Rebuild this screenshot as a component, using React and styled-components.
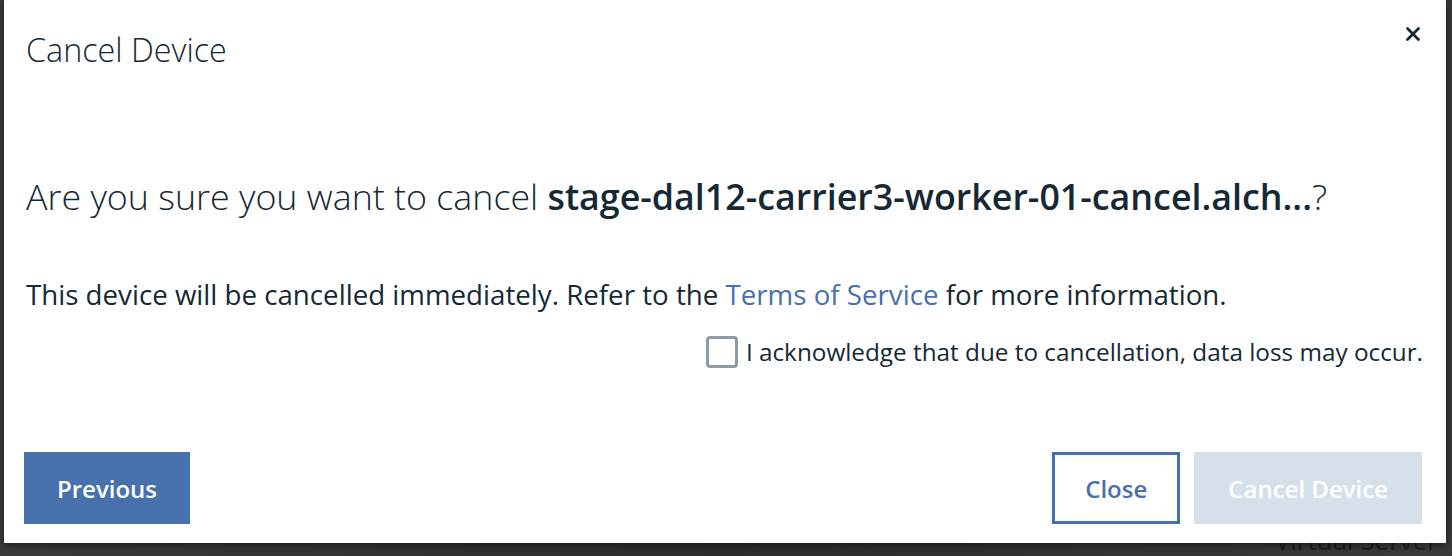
import styled, { createGlobalStyle } from "styled-components";

const GlobalStyle = createGlobalStyle`
  html, body {
    margin: 0;
    padding: 0;
    background: #2b2b2b;
    overflow: hidden;
  }
  body {
    font-family: "Open Sans", "Noto Sans", sans-serif;
    color: #152935;
  }
`;

export default function App() {
  return (
    <>
      <GlobalStyle />
      <StyledPage>
        <StyledModal>
          <StyledHeader>
            <StyledTitle>Cancel Device</StyledTitle>
            <StyledCloseIcon aria-label="close">
              <svg width="16" height="16" viewBox="0 0 16 16">
                <path
                  d="M2.5 2.5 L13.5 13.5 M13.5 2.5 L2.5 13.5"
                  stroke="#152935"
                  strokeWidth="2.8"
                  strokeLinecap="round"
                />
              </svg>
            </StyledCloseIcon>
          </StyledHeader>

          <StyledBody>
            <StyledQuestion>
              Are you sure you want to cancel{" "}
              <strong>stage-dal12-carrier3-worker-01-cancel.alch...</strong>?
            </StyledQuestion>
            <StyledText>
              This device will be cancelled immediately. Refer to the{" "}
              <StyledLink href="#">Terms of Service</StyledLink> for more
              information.
            </StyledText>
            <StyledCheckRow>
              <StyledCheckbox />
              <span>I acknowledge that due to cancellation, data loss may occur.</span>
            </StyledCheckRow>
          </StyledBody>

          <StyledFooter>
            <StyledButton $variant="primary">Previous</StyledButton>
            <StyledButtonGroup>
              <StyledButton $variant="secondary">Close</StyledButton>
              <StyledButton $variant="disabled" disabled>
                Cancel Device
              </StyledButton>
            </StyledButtonGroup>
          </StyledFooter>
        </StyledModal>
        <StyledUnderlay>
          <span>Virtual Server</span>
        </StyledUnderlay>
      </StyledPage>
    </>
  );
}

const StyledPage = styled.div`
  display: flex;
  flex-direction: column;
  width: 1452px;
  height: 556px;
  padding: 0 6px 0 4px;
  box-sizing: border-box;
  background: linear-gradient(to right, #3a3a3a, #2c2c2c 50%, #3a3a3a);
`;

const StyledModal = styled.div`
  display: flex;
  flex-direction: column;
  height: 543px;
  flex-shrink: 0;
  background: #ffffff;
  box-shadow: 0 2px 8px rgba(0, 0, 0, 0.5);
  position: relative;
  z-index: 1;
`;

const StyledHeader = styled.div`
  display: flex;
  justify-content: space-between;
  align-items: flex-start;
  padding: 29px 23px 0 22px;
`;

const StyledTitle = styled.h2`
  margin: 0;
  font-size: 32.3px;
  font-weight: 300;
  line-height: 40px;
  color: #152935;
`;

const StyledCloseIcon = styled.button`
  display: flex;
  padding: 0;
  margin: -3px 2px 0 0;
  border: none;
  background: none;
  cursor: pointer;
`;

const StyledBody = styled.div`
  display: flex;
  flex-direction: column;
  padding: 0 23px 0 22px;
`;

const StyledQuestion = styled.p`
  margin: 105px 0 0;
  font-size: 35.8px;
  font-weight: 300;
  line-height: 44px;
  color: #152935;

  & strong {
    font-weight: 600;
  }
`;

const StyledText = styled.p`
  margin: 59px 0 0;
  font-size: 27.7px;
  font-weight: 400;
  line-height: 34px;
  color: #152935;
`;

const StyledLink = styled.a`
  color: #4571ae;
  text-decoration: none;
`;

const StyledCheckRow = styled.label`
  display: flex;
  align-items: center;
  align-self: flex-end;
  gap: 8px;
  margin-top: 25px;
  font-size: 24.3px;
  line-height: 32px;
  color: #152935;
`;

const StyledCheckbox = styled.span`
  width: 32px;
  height: 32px;
  box-sizing: border-box;
  border: 3px solid #8d9ba6;
  border-radius: 4px;
  background: #ffffff;
`;

const StyledFooter = styled.div`
  display: flex;
  justify-content: space-between;
  align-items: center;
  margin-top: auto;
  padding: 0 24px 19px 20px;
`;

const StyledButtonGroup = styled.div`
  display: flex;
  gap: 14px;
`;

const StyledButton = styled.button`
  height: 72px;
  padding: 0 30px;
  box-sizing: border-box;
  font-family: "Open Sans", "Noto Sans", sans-serif;
  font-size: 24px;
  font-weight: 600;
  cursor: pointer;
  border: 3px solid transparent;
  border-radius: 0;

  ${({ $variant }) =>
    $variant === "primary" &&
    `
    background: #4771ad;
    border-color: #4771ad;
    color: #ffffff;
  `}
  ${({ $variant }) =>
    $variant === "secondary" &&
    `
    background: #ffffff;
    border-color: #4771ad;
    color: #4771ad;
  `}
  ${({ $variant }) =>
    $variant === "disabled" &&
    `
    background: #d6e0eb;
    border-color: #d6e0eb;
    color: #ffffff;
    cursor: not-allowed;
    padding: 0 31px;
  `}
`;

const StyledUnderlay = styled.div`
  display: flex;
  justify-content: flex-end;
  height: 13px;
  padding-right: 8px;

  & span {
    font-size: 26px;
    line-height: 30px;
    margin-top: -18px;
    color: #1e1e1e;
    white-space: nowrap;
  }
`;
